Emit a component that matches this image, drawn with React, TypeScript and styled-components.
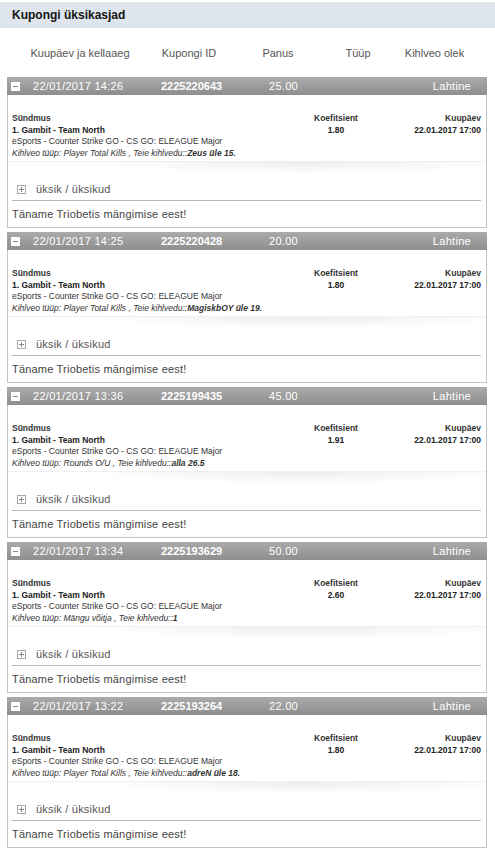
import styled, { createGlobalStyle } from "styled-components";

const GlobalStyle = createGlobalStyle`
    body {
        margin: 0;
        background: #ffffff;
        font-family: "Liberation Sans", Arial, sans-serif;
    }
`

interface Coupon {
    time: string;
    id: string;
    stake: string;
    odds: string;
    betType: string;
    pick: string;
}

const coupons: Coupon[] = [
    { time: "22/01/2017 14:26", id: "2225220643", stake: "25.00", odds: "1.80", betType: "Player Total Kills", pick: "Zeus üle 15." },
    { time: "22/01/2017 14:25", id: "2225220428", stake: "20.00", odds: "1.80", betType: "Player Total Kills", pick: "MagiskbOY üle 19." },
    { time: "22/01/2017 13:36", id: "2225199435", stake: "45.00", odds: "1.91", betType: "Rounds O/U", pick: "alla 26.5" },
    { time: "22/01/2017 13:34", id: "2225193629", stake: "50.00", odds: "2.60", betType: "Mängu võitja", pick: "1" },
    { time: "22/01/2017 13:22", id: "2225193264", stake: "22.00", odds: "1.80", betType: "Player Total Kills", pick: "adreN üle 18." },
]

const Page = styled.div`
    padding-top: 2px;
    width: 495px;
`

const TitleBar = styled.div`
    height: 26px;
    background: #dfe5ed;
    display: flex;
    align-items: center;
    padding-left: 12px;
    font-size: 12px;
    font-weight: bold;
    color: #151515;
`

const ColumnHeads = styled.div`
    display: grid;
    grid-template-columns: 160px 58px 120px 40px 1fr;
    height: 49px;
    align-items: center;
    font-size: 11px;
    color: #555;
    text-align: center;
    padding-right: 4px;
`

const List = styled.div`
    display: flex;
    flex-direction: column;
    gap: 4px;
    padding: 0 8px 0 7px;
`

const Card = styled.div`
    border: 1px solid #c4c4c4;
    border-top: none;
    background: #fff;
`

const CardHead = styled.div`
    height: 18px;
    margin: 0 -1px;
    background: linear-gradient(#ababab, #8e8e8e);
    display: grid;
    grid-template-columns: 22px 128px 108px 1fr auto;
    align-items: center;
    color: #fff;
    font-size: 11px;
    letter-spacing: 0.3px;
    padding: 0 16px 0 4px;
`

const Toggle = styled.span`
    width: 9px;
    height: 9px;
    background: #fff;
    display: flex;
    align-items: center;
    justify-content: center;

    &::after {
        content: "";
        width: 5px;
        height: 1px;
        background: #8a8a8a;
    }
`

const CouponId = styled.span`
    font-weight: bold;
    letter-spacing: 0;
`

const Body = styled.div`
    display: grid;
    grid-template-columns: 1fr 70px 110px;
    padding: 18px 5px 0 4px;
    font-size: 8.5px;
    line-height: 11.5px;
    color: #222;
`

const Label = styled.div<{ $align?: string }>`
    font-weight: bold;
    color: #333;
    text-align: ${p => p.$align ?? "left"};
`

const Strong = styled.div<{ $align?: string }>`
    font-weight: bold;
    text-align: ${p => p.$align ?? "left"};
`

const Plain = styled.div`
    color: #333;
`

const Italic = styled.div`
    font-style: italic;
    color: #333;
    white-space: nowrap;
`

const Shade = styled.div`
    height: 16px;
    margin: 2px 0 0;
    border-top: 1px solid #f0f0f0;
    background: radial-gradient(ellipse 60% 100% at 62% 0%, rgba(0, 0, 0, 0.07), rgba(0, 0, 0, 0) 75%);
`

const Split = styled.div`
    display: flex;
    align-items: center;
    gap: 10px;
    height: 22px;
    margin: 0 5px 0 4px;
    padding-left: 5px;
    border-bottom: 1px solid #b9b9b9;
    font-size: 11px;
    color: #555;
    letter-spacing: 0.2px;
`

const PlusBox = styled.span`
    width: 7px;
    height: 7px;
    border: 1px solid #a8a8a8;
    position: relative;

    &::before, &::after {
        content: "";
        position: absolute;
        background: #888;
    }
    &::before {
        left: 1px;
        top: 3px;
        width: 5px;
        height: 1px;
    }
    &::after {
        left: 3px;
        top: 1px;
        width: 1px;
        height: 5px;
    }
`

const Thanks = styled.div`
    height: 26px;
    display: flex;
    align-items: center;
    padding-left: 4px;
    font-size: 11px;
    color: #444;
    letter-spacing: 0.2px;
`

function CouponCard({ c }: { c: Coupon }) {
    return (
        <Card>
            <CardHead>
                <Toggle />
                <span>{c.time}</span>
                <CouponId>{c.id}</CouponId>
                <span>{c.stake}</span>
                <span>Lahtine</span>
            </CardHead>
            <Body>
                <div>
                    <Label>Sündmus</Label>
                    <Strong>1. Gambit - Team North</Strong>
                    <Plain>eSports - Counter Strike GO - CS GO: ELEAGUE Major</Plain>
                    <Italic>Kihlveo tüüp: {c.betType} , Teie kihlvedu::<b>{c.pick}</b></Italic>
                </div>
                <div>
                    <Label $align="center">Koefitsient</Label>
                    <Strong $align="center">{c.odds}</Strong>
                </div>
                <div>
                    <Label $align="right">Kuupäev</Label>
                    <Strong $align="right">22.01.2017 17:00</Strong>
                </div>
            </Body>
            <Shade />
            <Split>
                <PlusBox />
                <span>üksik / üksikud</span>
            </Split>
            <Thanks>Täname Triobetis mängimise eest!</Thanks>
        </Card>
    )
}

export default function App() {
    return (
        <Page>
            <GlobalStyle />
            <TitleBar>Kupongi üksikasjad</TitleBar>
            <ColumnHeads>
                <span>Kuupäev ja kellaaeg</span>
                <span>Kupongi ID</span>
                <span>Panus</span>
                <span>Tüüp</span>
                <span>Kihlveo olek</span>
            </ColumnHeads>
            <List>
                {coupons.map(c => <CouponCard key={c.id} c={c} />)}
            </List>
        </Page>
    )
}
